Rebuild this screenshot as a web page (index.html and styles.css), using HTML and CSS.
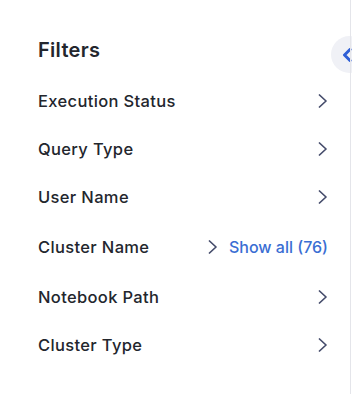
FILE: index.html
```html
<!DOCTYPE html>
<html>
<head>
<meta charset="utf-8">
<link rel="stylesheet" href="styles.css">
</head>
<body>
<aside class="panel">
  <h2 class="title">Filters</h2>
  <ul class="list">
    <li class="row"><span class="label">Execution Status</span><svg class="chev" viewBox="0 0 10 14"><polyline points="1.5,1 8,7 1.5,13"/></svg></li>
    <li class="row"><span class="label">Query Type</span><svg class="chev" viewBox="0 0 10 14"><polyline points="1.5,1 8,7 1.5,13"/></svg></li>
    <li class="row"><span class="label">User Name</span><svg class="chev" viewBox="0 0 10 14"><polyline points="1.5,1 8,7 1.5,13"/></svg></li>
    <li class="row row-tall"><span class="label">Cluster Name</span><span class="actions"><svg class="chev" viewBox="0 0 10 14"><polyline points="1.5,1 8,7 1.5,13"/></svg><span class="show">Show all (76)</span></span></li>
    <li class="row"><span class="label">Notebook Path</span><svg class="chev" viewBox="0 0 10 14"><polyline points="1.5,1 8,7 1.5,13"/></svg></li>
    <li class="row"><span class="label">Cluster Type</span><svg class="chev" viewBox="0 0 10 14"><polyline points="1.5,1 8,7 1.5,13"/></svg></li>
  </ul>
  <button class="collapse" aria-label="Collapse"><svg viewBox="0 0 10 14"><polyline points="8,1.5 2.5,7 8,12.5"/></svg></button>
</aside>
</body>
</html>
```

FILE: styles.css
```css
html, body {
  margin: 0;
  padding: 0;
  background: #ffffff;
}
body {
  font-family: Inter, "Noto Sans", "Liberation Sans", sans-serif;
  color: #23262d;
  overflow: hidden;
}
.panel {
  position: relative;
  z-index: 0;
  box-sizing: border-box;
  width: 350px;
  height: 394px;
  padding: 38px 22px 0 38px;
}
.panel::after {
  content: "";
  position: absolute;
  top: 0;
  bottom: 0;
  right: -1px;
  width: 1px;
  background: #e4e5ea;
  z-index: 1;
}
.title {
  margin: 0 0 15px;
  font-size: 20px;
  line-height: 24px;
  font-weight: 600;
  letter-spacing: 0.3px;
}
.list {
  list-style: none;
  margin: 0;
  padding: 0;
}
.row {
  display: flex;
  align-items: center;
  justify-content: space-between;
  height: 48px;
}
.row-tall {
  height: 52px;
}
.label {
  font-size: 16.5px;
  font-weight: 500;
  line-height: 20px;
  letter-spacing: 0.35px;
}
.chev {
  width: 10px;
  height: 14px;
  fill: none;
  stroke: #454c6b;
  stroke-width: 1.7;
  stroke-linecap: round;
  stroke-linejoin: round;
}
.actions {
  display: flex;
  align-items: center;
  gap: 11px;
}
.show {
  font-size: 16px;
  font-weight: 500;
  line-height: 20px;
  color: #3a6ed3;
}
.collapse {
  position: absolute;
  left: 331px;
  top: 36px;
  width: 37px;
  height: 37px;
  padding: 0;
  border: 0;
  border-radius: 50%;
  background: #f0f1f6;
  display: flex;
  align-items: center;
  justify-content: flex-start;
}
.collapse svg {
  margin-left: 11px;
  width: 10px;
  height: 14px;
  fill: none;
  stroke: #2f5fd6;
  stroke-width: 3;
  stroke-linecap: round;
  stroke-linejoin: round;
}
```
